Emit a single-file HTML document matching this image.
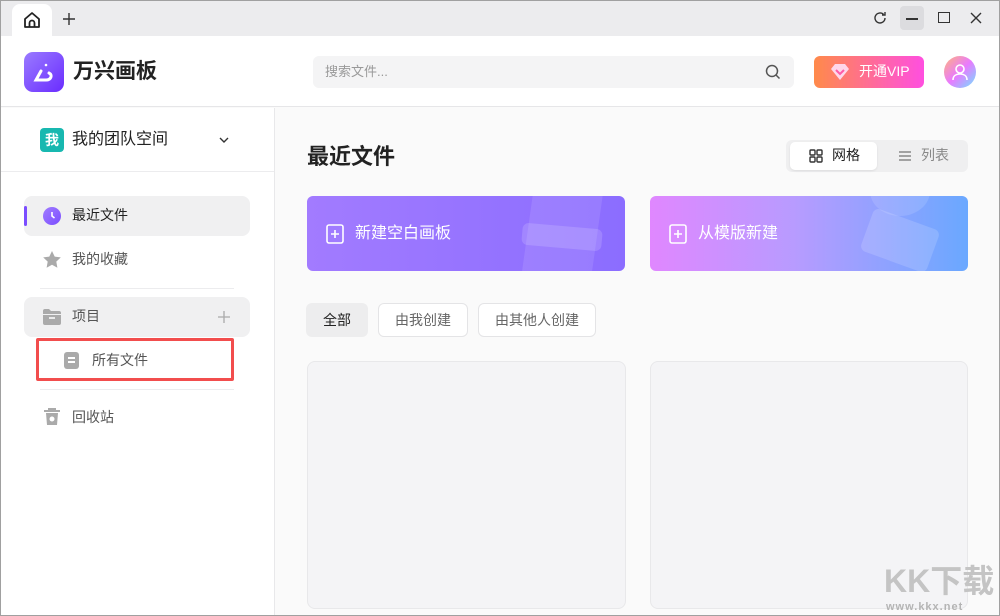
<!DOCTYPE html><html><head><meta charset="utf-8"><style>
*{box-sizing:border-box;margin:0;padding:0}
body{width:1000px;height:616px;overflow:hidden;font-family:"Liberation Sans","Noto Sans CJK SC",sans-serif;background:#fafafa;position:relative;color:#222;line-height:1.2}
.a{position:absolute}
</style></head><body>
<div class="a" style="left:0;top:0;width:1000px;height:616px;border:1px solid #a0a0a0;z-index:9;pointer-events:none"></div>
<div class="a" style="left:0;top:0;width:1000px;height:36px;background:#ececee"></div>
<div class="a" style="left:12px;top:4px;width:40px;height:34px;background:#fff;border-radius:8px 8px 0 0"></div>
<svg class="a" style="left:22px;top:10px" width="20" height="20" viewBox="0 0 20 20" fill="none" stroke="#222" stroke-width="1.8"><path d="M3 9L10 3l7 6v8H3z" stroke-linejoin="round"/><path d="M7.5 17v-4a2.5 2.5 0 015 0v4"/></svg>
<svg class="a" style="left:63px;top:13px" width="12" height="12" stroke="#333" stroke-width="1.4"><path d="M6 0v12M0 6h12"/></svg>
<svg class="a" style="left:872px;top:10px" width="16" height="16" viewBox="0 0 16 16" fill="none" stroke="#333" stroke-width="1.4"><path d="M13 8a5 5 0 11-1.5-3.6M13 2v3h-3"/></svg>
<div class="a" style="left:900px;top:6px;width:24px;height:24px;background:#dcdcdf;border-radius:4px"></div>
<div class="a" style="left:906px;top:18px;width:12px;height:1.5px;background:#333"></div>
<div class="a" style="left:938px;top:12px;width:12px;height:11px;border:1.5px solid #333"></div>
<svg class="a" style="left:970px;top:12px" width="12" height="12" viewBox="0 0 12 12" stroke="#333" stroke-width="1.4"><path d="M1 1l10 10M11 1L1 11"/></svg>
<div class="a" style="left:0;top:36px;width:1000px;height:71px;background:#fff;border-bottom:1px solid #e6e6e8"></div>
<div class="a" style="left:24px;top:52px;width:40px;height:40px;border-radius:9px;background:linear-gradient(135deg,#9a7bff,#6a2cff)"></div>
<svg class="a" style="left:24px;top:52px" width="40" height="40" viewBox="0 0 40 40" fill="none" stroke="#fff" stroke-width="3" stroke-linecap="round"><path d="M17 19l-5 9h10c5 0 7-5 3-7"/><circle cx="22" cy="13" r="1.3" fill="#fff" stroke="none"/></svg>
<div class="a" style="left:73px;top:59px;font-size:21px;font-weight:bold;color:#222">万兴画板</div>
<div class="a" style="left:313px;top:56px;width:481px;height:32px;background:#f4f4f5;border-radius:6px"></div>
<div class="a" style="left:325px;top:64px;font-size:13px;color:#999">搜索文件...</div>
<svg class="a" style="left:765px;top:64px" width="16" height="16" viewBox="0 0 16 16" fill="none" stroke="#555" stroke-width="1.5"><circle cx="7" cy="7" r="5.5"/><path d="M11 11l3.5 3.5"/></svg>
<div class="a" style="left:814px;top:56px;width:110px;height:32px;border-radius:6px;background:linear-gradient(90deg,#ff8a4a,#ff4fe0)"></div>
<svg class="a" style="left:830px;top:63px" width="20" height="18" viewBox="0 0 20 18"><path d="M5 1h10l4 5-9 11L1 6z" fill="#ffd6ea"/><path d="M6 7l4 4 4-4" stroke="#ff5aa8" stroke-width="2" fill="none"/></svg>
<div class="a" style="left:859px;top:63px;font-size:14px;color:#fff">开通VIP</div>
<div class="a" style="left:944px;top:56px;width:32px;height:32px;border-radius:50%;background:linear-gradient(135deg,#ffb47a,#e97aff 50%,#6fe3ff)"></div>
<svg class="a" style="left:944px;top:56px" width="32" height="32" viewBox="0 0 32 32" fill="none" stroke="#fff" stroke-width="1.6"><circle cx="16" cy="13" r="4"/><path d="M9 24c0-4 3-6 7-6s7 2 7 6"/></svg>
<div class="a" style="left:0;top:108px;width:275px;height:508px;background:#fff;border-right:1px solid #e8e8ea"></div>
<div class="a" style="left:40px;top:128px;width:24px;height:24px;border-radius:4px;background:#18b8b0;color:#fff;font-size:14px;font-weight:bold;text-align:center;line-height:24px">我</div>
<div class="a" style="left:72px;top:130px;font-size:16px;color:#222">我的团队空间</div>
<svg class="a" style="left:218px;top:135px" width="12" height="10" viewBox="0 0 12 10" fill="none" stroke="#333" stroke-width="1.4"><path d="M2 3l4 4 4-4"/></svg>
<div class="a" style="left:0;top:171px;width:274px;height:1px;background:#ececee"></div>
<div class="a" style="left:24px;top:196px;width:226px;height:40px;background:#f0f0f1;border-radius:8px"></div>
<div class="a" style="left:24px;top:206px;width:3px;height:20px;background:#7b4dff;border-radius:2px"></div>
<div class="a" style="left:43px;top:207px;width:18px;height:18px;border-radius:50%;background:linear-gradient(135deg,#a07cff,#7b4dff)"></div>
<svg class="a" style="left:43px;top:207px" width="18" height="18"><path d="M9 5v4l2.5 2" stroke="#fff" stroke-width="1.6" fill="none"/></svg>
<div class="a" style="left:72px;top:207px;font-size:14px;color:#222">最近文件</div>
<svg class="a" style="left:42px;top:250px" width="20" height="19" viewBox="0 0 20 19"><path d="M10 1l2.7 5.6 6.1.8-4.5 4.2 1.1 6.1L10 14.8l-5.4 2.9 1.1-6.1L1.2 7.4l6.1-.8z" fill="#aaa"/></svg>
<div class="a" style="left:72px;top:251px;font-size:14px;color:#555">我的收藏</div>
<div class="a" style="left:40px;top:288px;width:194px;height:1px;background:#ececee"></div>
<div class="a" style="left:24px;top:297px;width:226px;height:40px;background:#f0f0f1;border-radius:8px"></div>
<svg class="a" style="left:42px;top:308px" width="20" height="18" viewBox="0 0 20 18"><path d="M1 3a2 2 0 012-2h4l2 2h8a2 2 0 012 2v1H1z" fill="#aaa"/><path d="M1 7h18v8a2 2 0 01-2 2H3a2 2 0 01-2-2z" fill="#aaa"/><path d="M7 10h6" stroke="#fff" stroke-width="1.5"/></svg>
<div class="a" style="left:72px;top:308px;font-size:14px;color:#555">项目</div>
<svg class="a" style="left:218px;top:311px" width="12" height="12" stroke="#aaa" stroke-width="1.3"><path d="M6 0v12M0 6h12"/></svg>
<div class="a" style="left:36px;top:338px;width:198px;height:43px;border:3px solid #f24d4d;border-radius:2px"></div>
<div class="a" style="left:64px;top:352px;width:15px;height:17px;background:#aaa;border-radius:3px"></div>
<div class="a" style="left:68px;top:357px;width:7px;height:1.5px;background:#fff"></div>
<div class="a" style="left:68px;top:361px;width:7px;height:1.5px;background:#fff"></div>
<div class="a" style="left:92px;top:352px;font-size:14px;color:#555">所有文件</div>
<div class="a" style="left:40px;top:389px;width:194px;height:1px;background:#ececee"></div>
<svg class="a" style="left:43px;top:407px" width="18" height="20" viewBox="0 0 18 20"><path d="M1 4h16M6 4V2h6v2" stroke="#aaa" stroke-width="2" fill="none"/><path d="M3 6h12l-1 12H4z" fill="#aaa"/><circle cx="9" cy="12" r="2.5" fill="#fff"/></svg>
<div class="a" style="left:72px;top:409px;font-size:14px;color:#555">回收站</div>
<div class="a" style="left:307px;top:144px;font-size:22px;font-weight:bold;color:#222">最近文件</div>
<div class="a" style="left:786px;top:140px;width:182px;height:32px;background:#efeff0;border-radius:6px"></div>
<div class="a" style="left:790px;top:142px;width:87px;height:28px;background:#fff;border-radius:5px;box-shadow:0 1px 2px rgba(0,0,0,.08)"></div>
<svg class="a" style="left:809px;top:149px" width="14" height="14" viewBox="0 0 14 14" fill="none" stroke="#333" stroke-width="1.4"><rect x="1" y="1" width="5" height="5" rx="1"/><rect x="8" y="1" width="5" height="5" rx="1"/><rect x="1" y="8" width="5" height="5" rx="1"/><rect x="8" y="8" width="5" height="5" rx="1"/></svg>
<div class="a" style="left:832px;top:147px;font-size:14px;color:#222">网格</div>
<svg class="a" style="left:898px;top:149px" width="14" height="14" viewBox="0 0 14 14" stroke="#888" stroke-width="1.6"><path d="M1 3h12M1 7h12M1 11h12"/></svg>
<div class="a" style="left:921px;top:147px;font-size:14px;color:#888">列表</div>
<div class="a" style="left:307px;top:196px;width:318px;height:75px;border-radius:6px;background:linear-gradient(90deg,#a27bff,#8b6dff);overflow:hidden">
<div class="a" style="left:220px;top:-5px;width:70px;height:90px;background:rgba(255,255,255,.1);transform:skewX(-8deg);border-radius:6px"></div>
<div class="a" style="left:215px;top:30px;width:80px;height:22px;background:rgba(255,255,255,.15);border-radius:6px;transform:rotate(5deg)"></div>
</div>
<div class="a" style="left:650px;top:196px;width:318px;height:75px;border-radius:6px;background:linear-gradient(90deg,#e087ff,#b89bff 45%,#6aa8ff);overflow:hidden">
<div class="a" style="left:220px;top:-30px;width:60px;height:50px;border-radius:50%;background:rgba(255,255,255,.12)"></div>
<div class="a" style="left:215px;top:22px;width:70px;height:45px;background:rgba(255,255,255,.15);border-radius:6px;transform:rotate(20deg)"></div>
</div>
<svg class="a" style="left:326px;top:224px" width="18" height="20" viewBox="0 0 18 20" fill="none" stroke="#fff" stroke-width="1.6"><rect x="1" y="1" width="16" height="18" rx="2"/><path d="M9 6v8M5 10h8"/></svg>
<div class="a" style="left:355px;top:224px;font-size:16px;color:#fff">新建空白画板</div>
<svg class="a" style="left:669px;top:224px" width="18" height="20" viewBox="0 0 18 20" fill="none" stroke="#fff" stroke-width="1.6"><rect x="1" y="1" width="16" height="18" rx="2"/><path d="M9 6v8M5 10h8"/></svg>
<div class="a" style="left:698px;top:224px;font-size:16px;color:#fff">从模版新建</div>
<div class="a" style="left:306px;top:303px;width:62px;height:34px;background:#ededee;border-radius:6px;font-size:14px;color:#222;text-align:center;line-height:34px">全部</div>
<div class="a" style="left:378px;top:303px;width:90px;height:34px;border:1px solid #e4e4e6;background:#fff;border-radius:6px;font-size:14px;color:#666;text-align:center;line-height:32px">由我创建</div>
<div class="a" style="left:478px;top:303px;width:118px;height:34px;border:1px solid #e4e4e6;background:#fff;border-radius:6px;font-size:14px;color:#666;text-align:center;line-height:32px">由其他人创建</div>
<div class="a" style="left:307px;top:361px;width:319px;height:248px;background:#f4f4f6;border:1px solid #e8e8ea;border-radius:8px"></div>
<div class="a" style="left:650px;top:361px;width:318px;height:248px;background:#f4f4f6;border:1px solid #e8e8ea;border-radius:8px"></div>
<div class="a" style="left:884px;top:562px;font-size:32px;font-weight:bold;color:#c4c4c4">KK下载</div>
<div class="a" style="left:886px;top:601px;font-size:11px;font-weight:bold;color:#b4b4b4;letter-spacing:1px">www.kkx.net</div>
</body></html>
